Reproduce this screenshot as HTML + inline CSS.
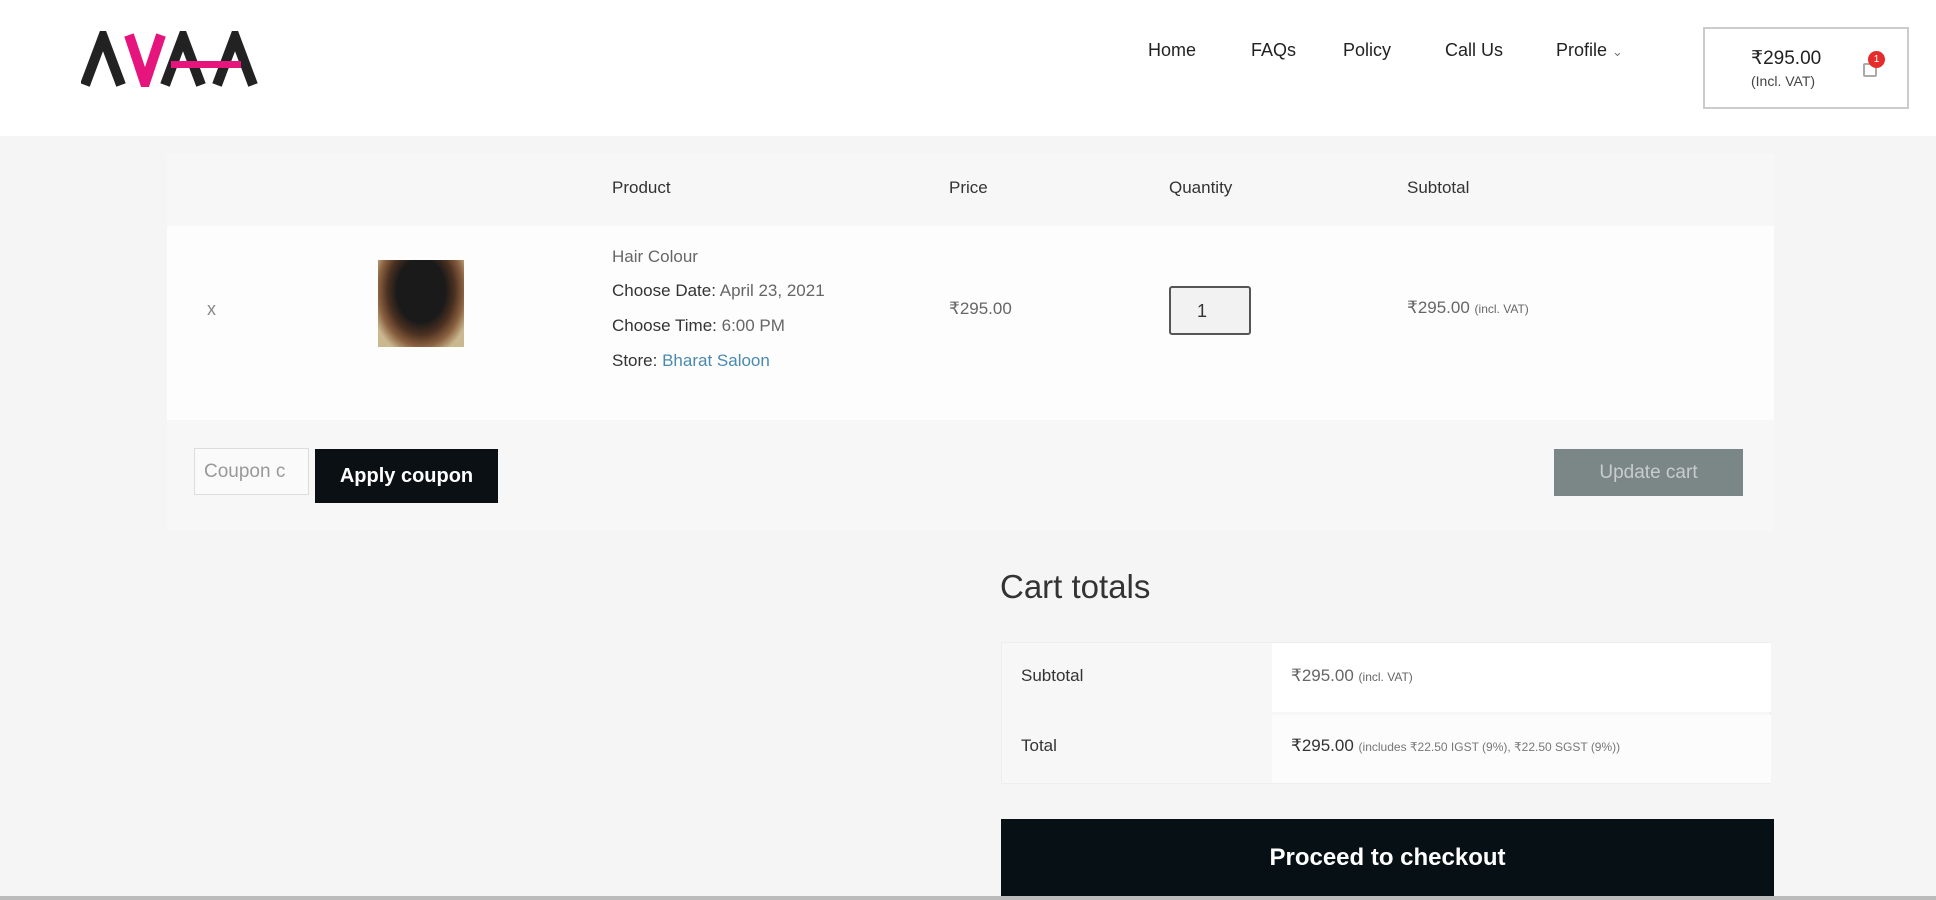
<!DOCTYPE html>
<html><head><meta charset="utf-8"><style>
*{margin:0;padding:0;box-sizing:border-box}
body{width:1936px;height:900px;overflow:hidden;background:#f5f5f5;font-family:"Liberation Sans",sans-serif;color:#333;position:relative}
.a{position:absolute}
header{position:absolute;left:0;top:0;width:1936px;height:136px;background:#fff}
.nav{font-size:18px;color:#222;top:40px}
.t{font-size:17px;color:#333}
.g{color:#666}
</style></head><body>
<header>
<svg class="a" style="left:81px;top:31px" width="182" height="56" viewBox="0 0 182 56">
<g fill="none" stroke-width="10" stroke-linejoin="miter">
<path d="M4 54 L22 6 L40 54" stroke="#222"/>
<path d="M48 4 L64 52 L80 4" stroke="#e6157e"/>
<path d="M84 54 L102 6 L120 54" stroke="#222"/>
<path d="M136 54 L154 6 L172 54" stroke="#222"/>
</g>
<rect x="90" y="30" width="70" height="7" fill="#e6157e"/>
</svg>
<div class="a nav" style="left:1148px">Home</div>
<div class="a nav" style="left:1251px">FAQs</div>
<div class="a nav" style="left:1343px">Policy</div>
<div class="a nav" style="left:1445px">Call Us</div>
<div class="a nav" style="left:1556px">Profile <span style="font-size:13px;color:#777">&#8964;</span></div>
<div class="a" style="left:1703px;top:27px;width:206px;height:82px;border:2px solid #ccc;background:#fff">
<div class="a" style="left:46px;top:18px;font-size:19px;color:#222">₹295.00</div>
<div class="a" style="left:46px;top:44px;font-size:14px;color:#444">(Incl. VAT)</div>
<div class="a" style="left:158px;top:34px;width:14px;height:14px;border:2px solid #aaa;border-radius:2px"></div>
<div class="a" style="left:163px;top:22px;width:17px;height:17px;border-radius:50%;background:#e52b2b;color:#fff;font-size:10px;text-align:center;line-height:17px">1</div>
</div>
</header>
<div class="a" style="left:167px;top:154px;width:1607px;height:377px;background:#f7f7f7"></div>
<div class="a" style="left:167px;top:226px;width:1607px;height:194px;background:#fdfdfd"></div>
<div class="a t" style="left:612px;top:178px">Product</div>
<div class="a t" style="left:949px;top:178px">Price</div>
<div class="a t" style="left:1169px;top:178px">Quantity</div>
<div class="a t" style="left:1407px;top:178px">Subtotal</div>
<div class="a" style="left:207px;top:299px;font-size:18px;color:#888">x</div>
<div class="a" style="left:378px;top:260px;width:86px;height:87px;background:radial-gradient(ellipse at 50% 35%,#1a1a1a 0 40%,#4a3020 55%,#8a6040 70%,#c9b890 85%)"></div>
<div class="a t g" style="left:612px;top:247px">Hair Colour</div>
<div class="a t" style="left:612px;top:281px">Choose Date: <span class="g">April 23, 2021</span></div>
<div class="a t" style="left:612px;top:316px">Choose Time: <span class="g">6:00 PM</span></div>
<div class="a t" style="left:612px;top:351px">Store: <span style="color:#4a8ab0">Bharat Saloon</span></div>
<div class="a t g" style="left:949px;top:299px">₹295.00</div>
<div class="a" style="left:1169px;top:286px;width:82px;height:49px;border:2px solid #555;border-radius:3px;background:#f2f2f2;font-size:18px;padding:13px 0 0 26px">1</div>
<div class="a t g" style="left:1407px;top:298px">₹295.00 <small style="font-size:12px">(incl. VAT)</small></div>
<div class="a" style="left:194px;top:448px;width:115px;height:47px;border:1px solid #ddd;background:#fafafa;font-size:19px;color:#999;padding:12px 0 0 9px;overflow:hidden;white-space:nowrap">Coupon c</div>
<div class="a" style="left:315px;top:449px;width:183px;height:54px;background:#0a1014;color:#fff;font-size:20px;font-weight:bold;text-align:center;line-height:54px">Apply coupon</div>
<div class="a" style="left:1554px;top:449px;width:189px;height:47px;background:#7b8686;color:#c8cccc;font-size:19px;text-align:center;line-height:47px">Update cart</div>
<div class="a" style="left:1000px;top:568px;font-size:33px;color:#333">Cart totals</div>
<div class="a" style="left:1001px;top:642px;width:770px;height:142px;background:#f7f7f7;border:1px solid #eee"></div>
<div class="a" style="left:1272px;top:643px;width:499px;height:69px;background:#fff"></div>
<div class="a" style="left:1272px;top:715px;width:499px;height:68px;background:#fcfcfc"></div>
<div class="a t" style="left:1021px;top:666px">Subtotal</div>
<div class="a t" style="left:1021px;top:736px">Total</div>
<div class="a t g" style="left:1291px;top:666px">₹295.00 <small style="font-size:12px">(incl. VAT)</small></div>
<div class="a t" style="left:1291px;top:736px">₹295.00 <small style="font-size:12px;color:#777">(includes ₹22.50 IGST (9%), ₹22.50 SGST (9%))</small></div>
<div class="a" style="left:1001px;top:819px;width:773px;height:81px;background:#071014;color:#fff;font-size:24px;font-weight:bold;text-align:center;padding-top:25px">Proceed to checkout</div>
<div class="a" style="left:0;top:896px;width:1936px;height:4px;background:#bbb"></div>
</body></html>
